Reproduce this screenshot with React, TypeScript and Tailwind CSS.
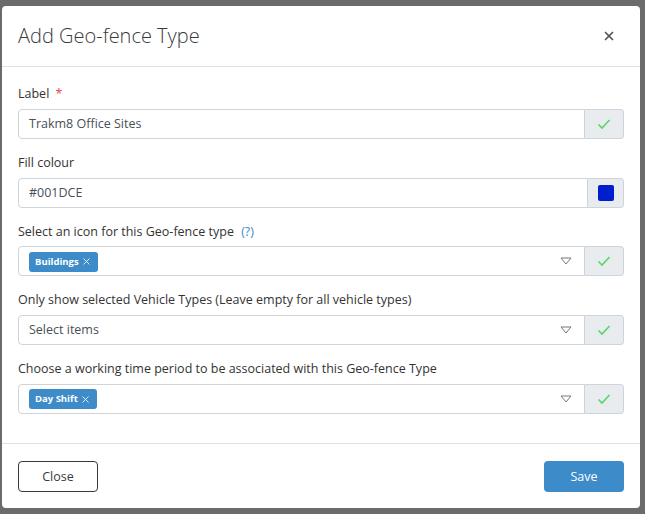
import { X } from "lucide-react";

const font = { fontFamily: '"Open Sans", "Noto Sans", sans-serif' };

const Check = () => (
  <svg width="16" height="16" viewBox="0 0 16 16" fill="none">
    <path d="M2.5 8.5 L6 12 L13.5 4" stroke="#5ad36b" strokeWidth="1.6" />
  </svg>
);

const Caret = () => (
  <svg width="12" height="8" viewBox="0 0 12 8" fill="none">
    <path d="M1 1 L11 1 L6 7 Z" stroke="#777" strokeWidth="1" fill="white" />
  </svg>
);

const Tag = ({ text }: { text: string }) => (
  <span className="inline-flex h-[20px] items-center gap-[2px] rounded-[3px] bg-[#3d8bc9] px-[6px] text-[9.5px] font-bold text-white">
    {text}
    <X className="h-[11px] w-[11px]" strokeWidth={1.8} />
  </span>
);

const Addon = ({ children }: { children: React.ReactNode }) => (
  <div className="flex w-[39px] items-center justify-center rounded-r-[4px] border border-l-0 border-[#ced4da] bg-[#e9ecef]">
    {children}
  </div>
);

const SelectRow = ({ children }: { children?: React.ReactNode }) => (
  <div className="flex h-[30px]">
    <div className="flex flex-1 items-center rounded-l-[4px] border border-[#ced4da] bg-white pl-[10px] pr-[12px]">
      <div className="flex flex-1 items-center pt-[1px]">{children}</div>
      <Caret />
    </div>
    <Addon>
      <Check />
    </Addon>
  </div>
);

export default function App() {
  return (
    <div className="h-[514px] w-[645px] bg-[#6b6b6b] pt-[6px] pl-[2px]" style={font}>
      <div className="flex h-[502px] w-[638px] flex-col rounded-[4px] bg-white">
        <div className="flex h-[61px] items-center justify-between border-b border-[#dee2e6] pl-[16px] pr-[24px]">
          <h1 className="text-[20px] font-light text-[#3a3a3a]">Add Geo-fence Type</h1>
          <X className="h-[14px] w-[14px] text-[#555]" strokeWidth={3} />
        </div>

        <div className="flex flex-1 flex-col gap-[15px] px-[16px] pt-[18px] text-[12.5px] text-[#333]">
          <div className="flex flex-col gap-[5px]">
            <div>
              Label <span className="ml-[3px] text-[#e74c3c]">*</span>
            </div>
            <div className="flex h-[30px]">
              <div className="flex flex-1 items-center rounded-l-[4px] border border-[#ced4da] pl-[10px] pt-[2px] text-[#495057]">
                Trakm8 Office Sites
              </div>
              <Addon>
                <Check />
              </Addon>
            </div>
          </div>

          <div className="flex flex-col gap-[5px]">
            <div>Fill colour</div>
            <div className="flex h-[30px]">
              <div className="flex flex-1 items-center rounded-l-[4px] border border-[#ced4da] pl-[10px] pt-[2px] text-[#495057]">
                #001DCE
              </div>
              <div className="flex w-[36px] items-center justify-center rounded-r-[4px] border border-l-0 border-[#ced4da] bg-[#e9ecef]">
                <div className="h-[16px] w-[16px] rounded-[2px] bg-[#001dce]" />
              </div>
            </div>
          </div>

          <div className="flex flex-col gap-[5px]">
            <div>
              Select an icon for this Geo-fence type <span className="ml-[4px] text-[#3d8bc9]">(?)</span>
            </div>
            <SelectRow>
              <Tag text="Buildings" />
            </SelectRow>
          </div>

          <div className="flex flex-col gap-[5px]">
            <div>Only show selected Vehicle Types (Leave empty for all vehicle types)</div>
            <SelectRow>
              <span className="text-[#495057]">Select items</span>
            </SelectRow>
          </div>

          <div className="flex flex-col gap-[5px]">
            <div>Choose a working time period to be associated with this Geo-fence Type</div>
            <SelectRow>
              <Tag text="Day Shift" />
            </SelectRow>
          </div>
        </div>

        <div className="flex h-[65px] items-center justify-between border-t border-[#dee2e6] px-[16px]">
          <button className="h-[31px] w-[80px] rounded-[4px] border border-[#343a40] pt-[2px] text-[12.5px] text-[#343a40]">
            Close
          </button>
          <button className="h-[31px] w-[80px] rounded-[4px] bg-[#3d8bc9] pt-[2px] text-[12.5px] text-white">
            Save
          </button>
        </div>
      </div>
    </div>
  );
}
